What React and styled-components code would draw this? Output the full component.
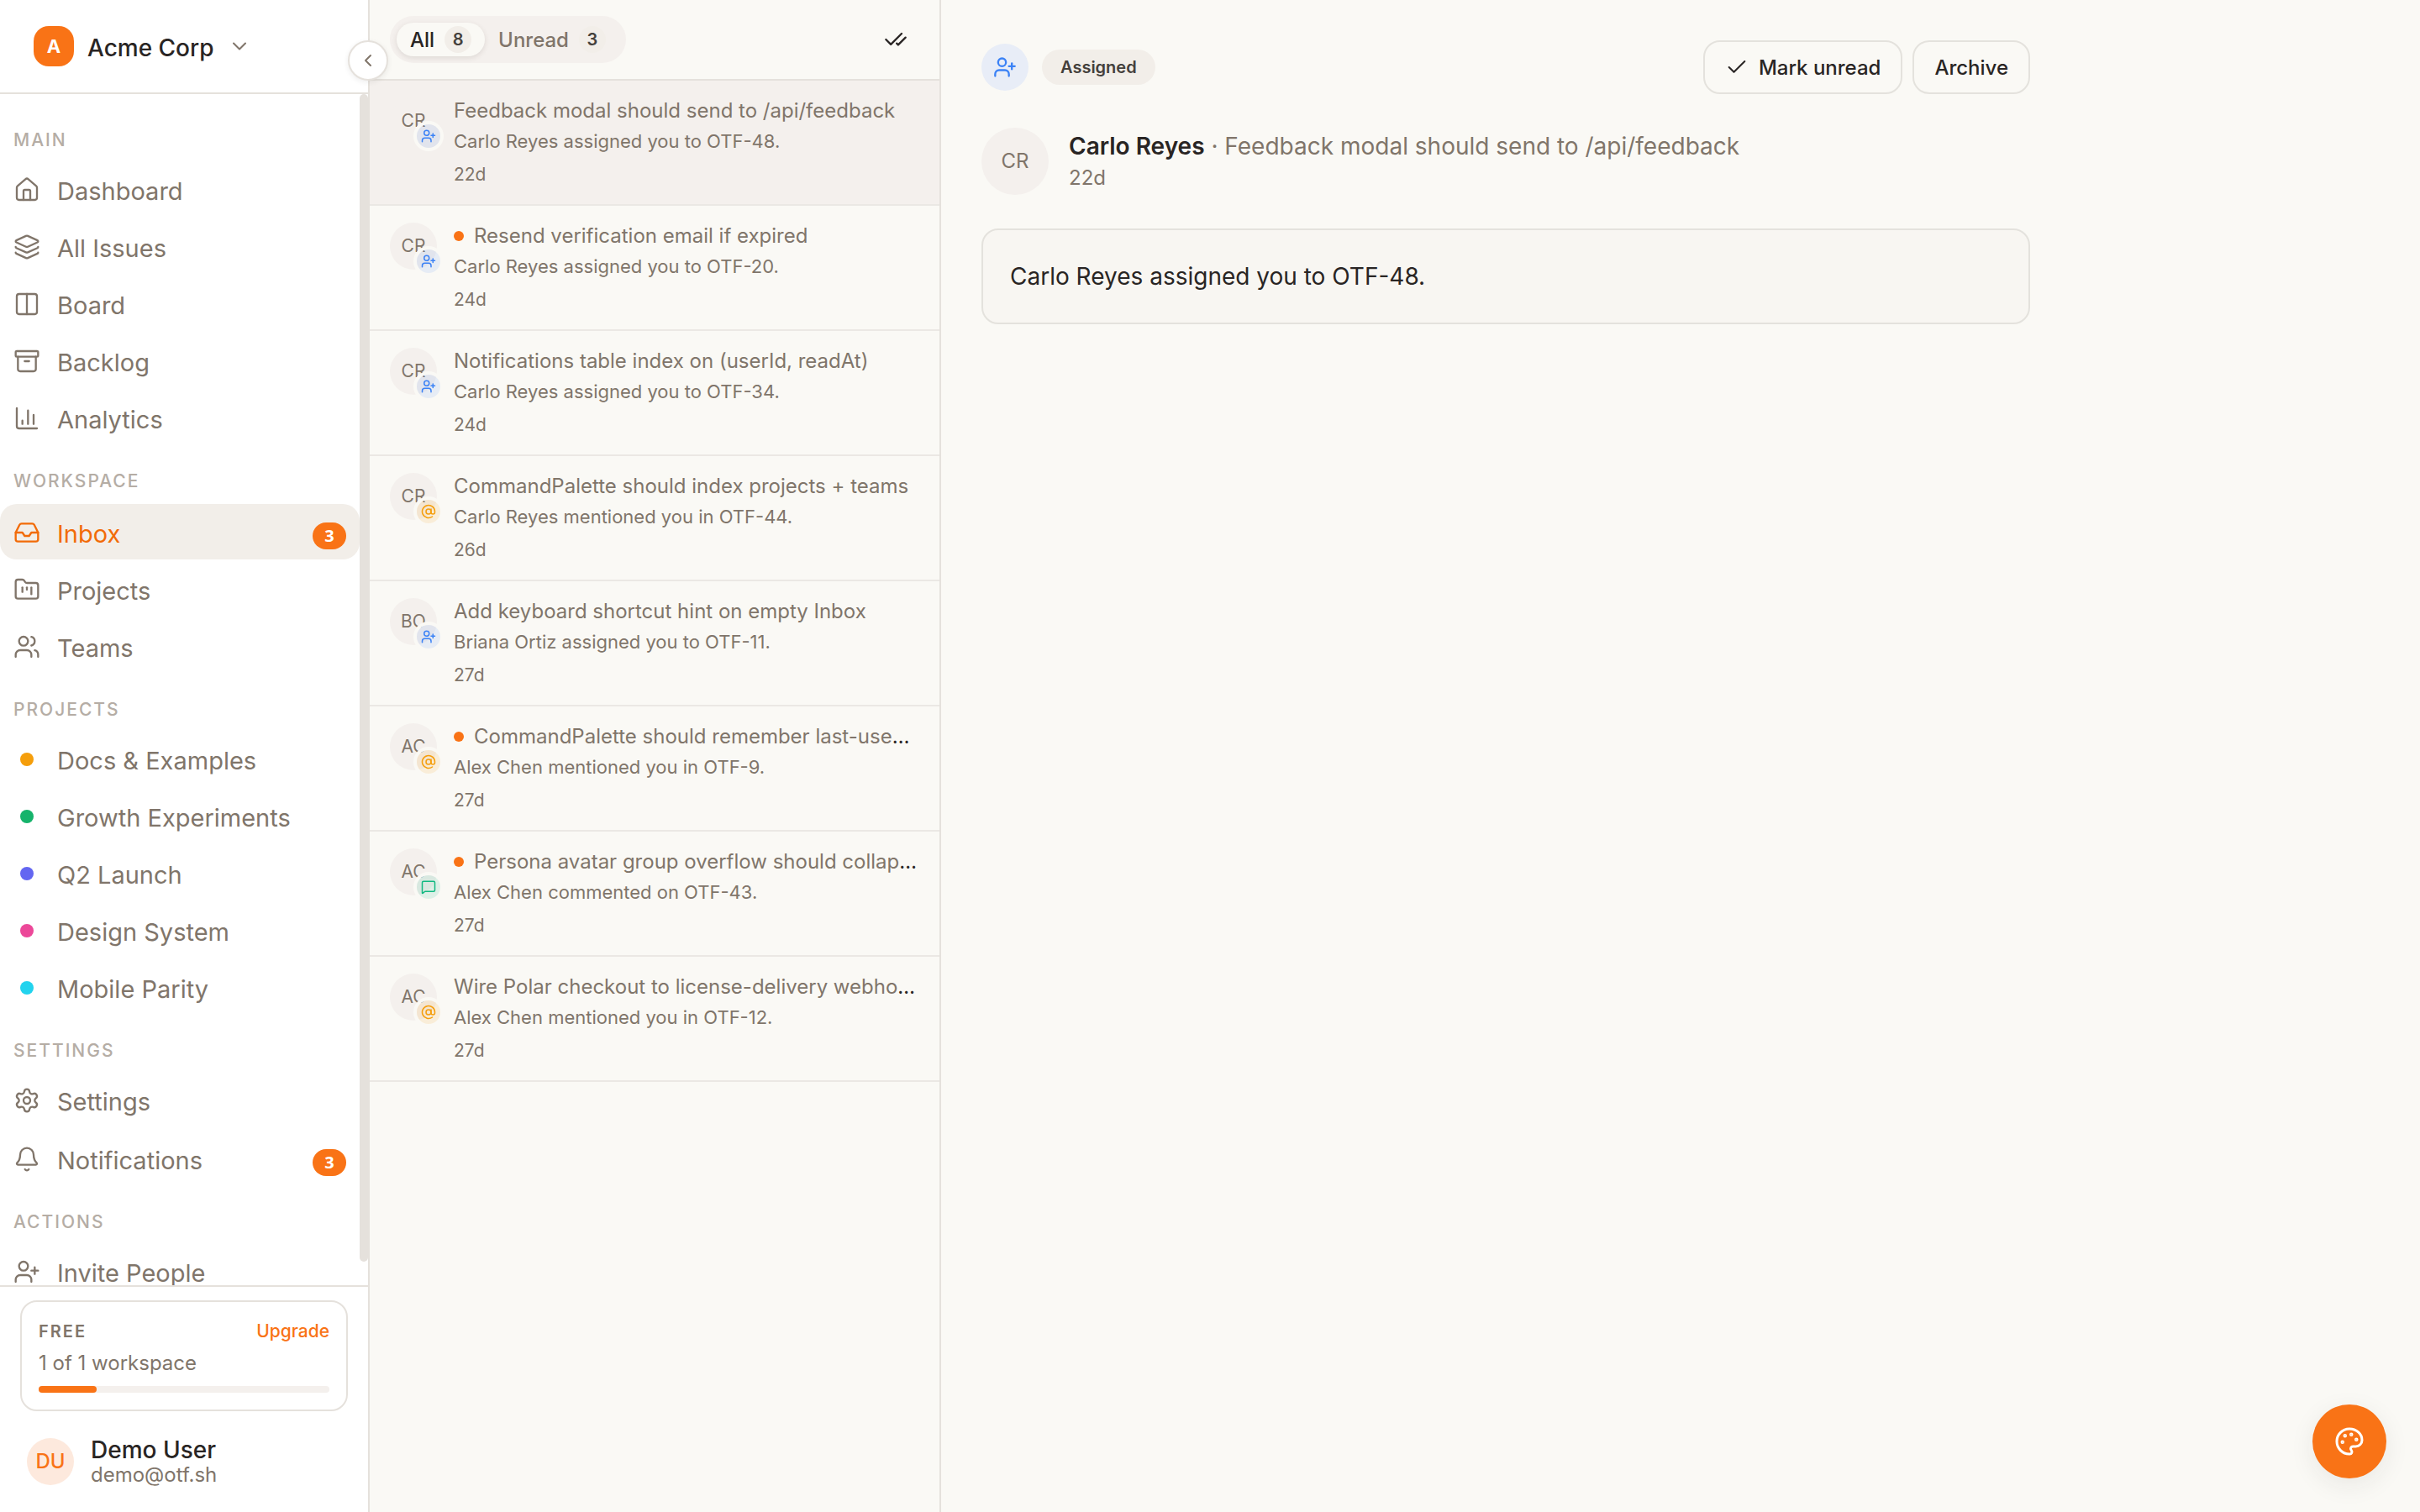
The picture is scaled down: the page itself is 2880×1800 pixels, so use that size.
import React from "react";
import styled, { createGlobalStyle, css } from "styled-components";
import {
  House, Layers, Columns2, Archive, Inbox, FolderKanban, Users, Settings, Bell,
  UserPlus, ChevronDown, ChevronLeft, CheckCheck, Check, AtSign, MessageSquare, Palette,
} from "lucide-react";

const c = {
  page: "#faf9f5",
  panel: "#ffffff",
  card: "#f8f6f2",
  border: "#e5e1dc",
  rowBorder: "#ebe8e4",
  soft: "#f4f0ed",
  chip: "#f2eee9",
  ink: "#292524",
  body: "#44403c",
  muted: "#80756a",
  faint: "#b5ada5",
  orange: "#f97316",
  active: "#f26b08",
};

const Global = createGlobalStyle`
  *, *::before, *::after { box-sizing: border-box; }
  body { margin: 0; background: ${c.page}; }
  body, button { font-family: Inter, "Liberation Sans", sans-serif; color: ${c.ink}; }
  button { margin: 0; padding: 0; border: 0; background: none; cursor: pointer; text-align: left; }
  a { color: inherit; text-decoration: none; }
  h2, p, ul { margin: 0; padding: 0; }
  ul { list-style: none; }
  svg { display: block; flex: none; }
`;

const Shell = styled.div`
  display: grid;
  grid-template-columns: 440px 680px minmax(0, 1fr);
  height: 100vh;
  overflow: hidden;
`;

/* Sidebar */

const Sidebar = styled.aside`
  position: relative;
  display: flex;
  flex-direction: column;
  min-height: 0;
  background: ${c.panel};
  border-right: 2px solid ${c.border};
`;

const SidebarHeader = styled.header`
  flex: none;
  display: flex;
  align-items: center;
  height: 112px;
  padding: 0 40px;
  border-bottom: 2px solid ${c.border};
`;

const WorkspaceButton = styled.button`
  display: flex;
  align-items: center;
  gap: 16px;
  svg { color: ${c.muted}; }
`;

const WorkspaceName = styled.span`
  padding-top: 4px;
  font-size: 28px;
  font-weight: 500;
  line-height: 40px;
`;

const WorkspaceLogo = styled.span`
  display: grid;
  place-items: center;
  width: 48px;
  height: 48px;
  border-radius: 18px;
  background: ${c.orange};
  color: #fff;
  font-size: 22px;
  font-weight: 700;
`;

const CollapseButton = styled.button`
  position: absolute;
  z-index: 2;
  top: 48px;
  right: -24px;
  display: grid;
  place-items: center;
  width: 48px;
  height: 48px;
  border: 2px solid ${c.border};
  border-radius: 50%;
  background: ${c.panel};
  color: ${c.muted};
  box-shadow: 0 2px 6px rgba(41, 37, 36, 0.08);
`;

const NavArea = styled.div`
  flex: 1;
  display: flex;
  min-height: 0;
`;

const NavScroll = styled.nav`
  flex: 1;
  min-width: 0;
  overflow-y: auto;
  scrollbar-width: none;
  padding: 12px 0 16px;
`;

const ScrollThumb = styled.div`
  width: 10px;
  height: 98%;
  border-radius: 5px;
  background: ${c.border};
`;

const SectionLabel = styled.h2`
  padding: 28px 16px 12px;
  color: ${c.faint};
  font-size: 21px;
  font-weight: 500;
  line-height: 30px;
  letter-spacing: 2px;
  text-transform: uppercase;
`;

const NavList = styled.ul`
  display: grid;
  gap: 4px;
`;

const NavLink = styled.a`
  display: flex;
  align-items: center;
  gap: 20px;
  height: ${(p) => (p.$counted ? 66 : 64)}px;
  padding: ${(p) => (p.$counted ? 2 : 0)}px 16px 0;
  border-radius: 20px;
  color: ${(p) => (p.$active ? c.active : c.muted)};
  background: ${(p) => (p.$active ? c.chip : "transparent")};
`;

const NavIcon = styled.span`
  display: grid;
  place-items: center;
  width: 32px;
  height: 32px;
`;

const NavText = styled.span`
  flex: 1;
  padding-top: 4px;
  font-size: 29px;
  line-height: 40px;
  white-space: nowrap;
`;

const ProjectDot = styled.span`
  width: 16px;
  height: 16px;
  border-radius: 50%;
  background: ${(p) => p.$color};
`;

const NavCount = styled.span`
  display: grid;
  place-items: center;
  min-width: 40px;
  height: 32px;
  margin-top: 8px;
  border-radius: 16px;
  background: ${c.orange};
  color: #fff;
  font-family: "Open Sans", sans-serif;
  font-size: 20px;
  font-weight: 700;
  line-height: 28px;
`;

const SidebarFooter = styled.footer`
  flex: none;
  padding: 16px 24px;
  border-top: 2px solid ${c.border};
`;

const PlanCard = styled.section`
  padding: 20px;
  border: 2px solid ${c.border};
  border-radius: 20px;
`;

const PlanHead = styled.div`
  display: flex;
  justify-content: space-between;
  line-height: 30px;
`;

const PlanName = styled.span`
  color: ${c.muted};
  font-weight: 600;
  font-size: 20px;
  letter-spacing: 2px;
`;

const Upgrade = styled.a`
  && { color: ${c.orange}; }
  font-size: 21px;
  font-weight: 500;
`;

const PlanUsage = styled.p`
  margin: 4px 0 8px;
  color: ${c.muted};
  font-size: 24px;
  line-height: 38px;
`;

const Meter = styled.div`
  height: 8px;
  border-radius: 4px;
  background: ${c.soft};
`;

const MeterFill = styled.div`
  width: 20%;
  height: 8px;
  border-radius: 4px;
  background: ${c.orange};
`;

const UserButton = styled.button`
  display: flex;
  align-items: center;
  gap: 20px;
  width: 100%;
  margin-top: 16px;
  padding: 14px 8px;
`;

const Avatar = styled.span`
  position: relative;
  flex: none;
  display: grid;
  place-items: center;
  width: ${(p) => p.$size}px;
  height: ${(p) => p.$size}px;
  border-radius: 50%;
  background: ${(p) => (p.$accent ? "#fde9dd" : c.soft)};
  color: ${(p) => (p.$accent ? c.orange : c.muted)};
  font-size: ${(p) => p.$font}px;
  font-weight: ${(p) => (p.$accent ? 500 : 400)};
  line-height: 30px;
`;

const UserText = styled.span`
  display: grid;
  font-size: 24px;
  line-height: 28px;
  color: ${c.muted};
  strong { font-size: 28px; line-height: 32px; font-weight: 500; color: ${c.ink}; }
`;

/* Notification list */

const ListPane = styled.section`
  display: flex;
  flex-direction: column;
  min-width: 0;
  border-right: 2px solid ${c.border};
`;

const ListHeader = styled.header`
  display: flex;
  align-items: center;
  justify-content: space-between;
  height: 96px;
  padding: 0 24px;
  border-bottom: 2px solid ${c.border};
`;

const Tabs = styled.div`
  display: flex;
  padding: 8px;
  border-radius: 28px;
  background: ${c.soft};
`;

const Tab = styled.button`
  display: flex;
  align-items: center;
  gap: 12px;
  height: 40px;
  padding: 0 16px;
  border-radius: 20px;
  color: ${c.muted};
  font-size: 24px;
  font-weight: 500;
  ${(p) => p.$selected && css`
    background: ${c.page};
    color: ${c.ink};
    box-shadow: 0 2px 6px rgba(68, 50, 40, 0.12);
  `}
`;

const TabCount = styled.span`
  display: grid;
  place-items: center;
  width: 32px;
  height: 32px;
  border-radius: 50%;
  background: ${c.chip};
  color: ${c.body};
  font-size: 20px;
  font-weight: 600;
`;

const IconButton = styled.button`
  display: grid;
  place-items: center;
  width: 56px;
  height: 56px;
`;

const Item = styled.button`
  display: flex;
  align-items: flex-start;
  gap: 20px;
  width: 100%;
  height: 149px;
  padding: 20px 24px;
  border-bottom: 2px solid ${c.rowBorder};
  background: ${(p) => (p.$selected ? c.soft : "transparent")};
`;

const KindBadge = styled.span`
  position: absolute;
  right: -4px;
  bottom: -4px;
  display: grid;
  place-items: center;
  width: 28px;
  height: 28px;
  border-radius: 50%;
  color: ${(p) => p.$color};
  background: ${(p) => p.$tint};
  box-shadow: 0 0 0 4px ${c.page};
`;

const ItemBody = styled.span`
  flex: 1;
  min-width: 0;
  display: grid;
  color: ${c.muted};
`;

const TitleLine = styled.span`
  display: flex;
  align-items: center;
  gap: 12px;
  min-width: 0;
`;

const UnreadDot = styled.span`
  flex: none;
  width: 12px;
  height: 12px;
  border-radius: 50%;
  background: ${c.orange};
`;

const ItemTitle = styled.span`
  overflow: hidden;
  text-overflow: ellipsis;
  white-space: nowrap;
  color: ${c.ink};
  font-size: 24px;
  line-height: 32px;
  span { color: ${c.muted}; }
`;

const ItemText = styled.span`
  margin: 4px 0 8px;
  font-size: 22px;
  line-height: 32px;
`;

const ItemTime = styled.time`
  font-size: 21px;
  line-height: 32px;
`;

/* Detail */

const Detail = styled.main`
  min-width: 0;
  padding: 48px;
`;

const DetailInner = styled.article`
  max-width: 1248px;
`;

const DetailTop = styled.div`
  display: flex;
  align-items: center;
  justify-content: space-between;
`;

const Group = styled.div`
  display: flex;
  align-items: center;
  gap: ${(p) => p.$gap}px;
`;

const KindCircle = styled.span`
  display: grid;
  place-items: center;
  width: 56px;
  height: 56px;
  border-radius: 50%;
  background: #e8edf7;
  color: #3b82f6;
`;

const KindLabel = styled.span`
  padding: 0 22px;
  border-radius: 21px;
  background: ${c.chip};
  color: ${c.body};
  font-size: 20px;
  font-weight: 600;
  line-height: 42px;
`;

const OutlineButton = styled.button`
  display: flex;
  align-items: center;
  gap: 12px;
  height: 64px;
  padding: 0 24px;
  border: 2px solid #e4e2dd;
  border-radius: 20px;
  font-size: 24px;
  font-weight: 500;
`;

const Sender = styled.div`
  display: flex;
  align-items: center;
  gap: 24px;
  margin: 40px 0;
`;

const SenderText = styled.div`
  color: ${c.muted};
  font-size: 24px;
  line-height: 36px;
  p { font-size: 28px; line-height: 40px; }
  strong { color: ${c.ink}; font-weight: 600; }
`;

const Message = styled.p`
  padding: 35px 32px;
  border: 2px solid #e4e2dd;
  border-radius: 20px;
  background: ${c.card};
  font-size: 28px;
  line-height: 40px;
`;

const ThemeButton = styled.button`
  position: fixed;
  right: 40px;
  bottom: 40px;
  display: grid;
  place-items: center;
  width: 88px;
  height: 88px;
  border-radius: 50%;
  background: ${c.orange};
  color: #fff;
  box-shadow: 0 8px 30px rgba(41, 37, 36, 0.08);
`;

function ChartIcon({ size, strokeWidth }) {
  return (
    <svg width={size} height={size} viewBox="0 0 24 24" fill="none" stroke="currentColor" strokeWidth={strokeWidth} strokeLinecap="round" strokeLinejoin="round">
      <path d="M3 3v16a2 2 0 0 0 2 2h16M13 17V5M18 17V9M8 17v-3" />
    </svg>
  );
}

const sections = [
  ["Main", [
    { label: "Dashboard", icon: House },
    { label: "All Issues", icon: Layers },
    { label: "Board", icon: Columns2 },
    { label: "Backlog", icon: Archive },
    { label: "Analytics", icon: ChartIcon },
  ]],
  ["Workspace", [
    { label: "Inbox", icon: Inbox, count: 3, active: true },
    { label: "Projects", icon: FolderKanban },
    { label: "Teams", icon: Users },
  ]],
  ["Projects", [
    { label: "Docs & Examples", color: "#f59e0b" },
    { label: "Growth Experiments", color: "#16b36b" },
    { label: "Q2 Launch", color: "#6366f1" },
    { label: "Design System", color: "#ec4899" },
    { label: "Mobile Parity", color: "#22d3ee" },
  ]],
  ["Settings", [
    { label: "Settings", icon: Settings },
    { label: "Notifications", icon: Bell, count: 3 },
  ]],
  ["Actions", [{ label: "Invite People", icon: UserPlus }]],
];

const kinds = {
  assigned: { icon: UserPlus, color: "#3b82f6", tint: "rgba(59, 130, 246, 0.1)" },
  mentioned: { icon: AtSign, color: "#f59e0b", tint: "rgba(245, 158, 11, 0.12)" },
  commented: { icon: MessageSquare, color: "#10b981", tint: "rgba(16, 185, 129, 0.12)" },
};

const items = [
  { who: "CR", kind: "assigned", title: "Feedback modal should send to /api/feedback", text: "Carlo Reyes assigned you to OTF-48.", time: "22d", selected: true },
  { who: "CR", kind: "assigned", title: "Resend verification email if expired", text: "Carlo Reyes assigned you to OTF-20.", time: "24d", unread: true },
  { who: "CR", kind: "assigned", title: "Notifications table index on (userId, readAt)", text: "Carlo Reyes assigned you to OTF-34.", time: "24d" },
  { who: "CR", kind: "mentioned", title: "CommandPalette should index projects + teams", text: "Carlo Reyes mentioned you in OTF-44.", time: "26d" },
  { who: "BO", kind: "assigned", title: "Add keyboard shortcut hint on empty Inbox", text: "Briana Ortiz assigned you to OTF-11.", time: "27d" },
  { who: "AC", kind: "mentioned", title: "CommandPalette should remember last-used filter", text: "Alex Chen mentioned you in OTF-9.", time: "27d", unread: true },
  { who: "AC", kind: "commented", title: "Persona avatar group overflow should collapse", text: "Alex Chen commented on OTF-43.", time: "27d", unread: true },
  { who: "AC", kind: "mentioned", title: "Wire Polar checkout to license-delivery webhook", text: "Alex Chen mentioned you in OTF-12.", time: "27d" },
];

function NavItem({ label, icon: Icon, color, count, active }) {
  return (
    <li>
      <NavLink href="#" $active={active} $counted={Boolean(count)} aria-current={active ? "page" : undefined}>
        <NavIcon>{Icon ? <Icon size={32} strokeWidth={1.75} /> : <ProjectDot $color={color} />}</NavIcon>
        <NavText>{label}</NavText>
        {count && <NavCount>{count}</NavCount>}
      </NavLink>
    </li>
  );
}

function Notification({ who, kind, title, text, time, unread, selected }) {
  const { icon: Icon, color, tint } = kinds[kind];
  return (
    <li>
      <Item type="button" $selected={selected}>
        <Avatar $size={56} $font={21}>
          {who}
          <KindBadge $color={color} $tint={tint}><Icon size={18} strokeWidth={2} /></KindBadge>
        </Avatar>
        <ItemBody>
          <TitleLine>
            {unread && <UnreadDot />}
            <ItemTitle><span>{title}</span></ItemTitle>
          </TitleLine>
          <ItemText>{text}</ItemText>
          <ItemTime>{time}</ItemTime>
        </ItemBody>
      </Item>
    </li>
  );
}

export default function App() {
  return (
    <>
      <Global />
      <Shell>
        <Sidebar>
          <SidebarHeader>
            <WorkspaceButton type="button">
              <WorkspaceLogo>A</WorkspaceLogo>
              <WorkspaceName>Acme Corp</WorkspaceName>
              <ChevronDown size={28} strokeWidth={1.75} />
            </WorkspaceButton>
          </SidebarHeader>
          <CollapseButton type="button" aria-label="Collapse sidebar">
            <ChevronLeft size={24} strokeWidth={2} />
          </CollapseButton>
          <NavArea>
            <NavScroll>
              {sections.map(([name, links]) => (
                <section key={name}>
                  <SectionLabel>{name}</SectionLabel>
                  <NavList>{links.map((l) => <NavItem key={l.label} {...l} />)}</NavList>
                </section>
              ))}
            </NavScroll>
            <ScrollThumb aria-hidden="true" />
          </NavArea>
          <SidebarFooter>
            <PlanCard>
              <PlanHead>
                <PlanName>FREE</PlanName>
                <Upgrade href="#">Upgrade</Upgrade>
              </PlanHead>
              <PlanUsage>1 of 1 workspace</PlanUsage>
              <Meter><MeterFill /></Meter>
            </PlanCard>
            <UserButton type="button">
              <Avatar $size={56} $font={24} $accent>DU</Avatar>
              <UserText><strong>Demo User</strong>demo@otf.sh</UserText>
            </UserButton>
          </SidebarFooter>
        </Sidebar>

        <ListPane>
          <ListHeader>
            <Tabs role="tablist">
              <Tab type="button" role="tab" aria-selected="true" $selected>All<TabCount>8</TabCount></Tab>
              <Tab type="button" role="tab" aria-selected="false">Unread<TabCount>3</TabCount></Tab>
            </Tabs>
            <IconButton type="button" aria-label="Mark all as read"><CheckCheck size={28} strokeWidth={2} /></IconButton>
          </ListHeader>
          <ul>{items.map((n) => <Notification key={n.title} {...n} />)}</ul>
        </ListPane>

        <Detail>
          <DetailInner>
            <DetailTop>
              <Group $gap={16}>
                <KindCircle><UserPlus size={28} strokeWidth={2} /></KindCircle>
                <KindLabel>Assigned</KindLabel>
              </Group>
              <Group $gap={12}>
                <OutlineButton type="button"><Check size={28} strokeWidth={1.75} />Mark unread</OutlineButton>
                <OutlineButton type="button">Archive</OutlineButton>
              </Group>
            </DetailTop>
            <Sender>
              <Avatar $size={80} $font={24}>CR</Avatar>
              <SenderText>
                <p><strong>Carlo Reyes</strong> · Feedback modal should send to /api/feedback</p>
                <time>22d</time>
              </SenderText>
            </Sender>
            <Message>Carlo Reyes assigned you to OTF-48.</Message>
          </DetailInner>
        </Detail>
      </Shell>
      <ThemeButton type="button" aria-label="Change theme"><Palette size={36} strokeWidth={2} /></ThemeButton>
    </>
  );
}
